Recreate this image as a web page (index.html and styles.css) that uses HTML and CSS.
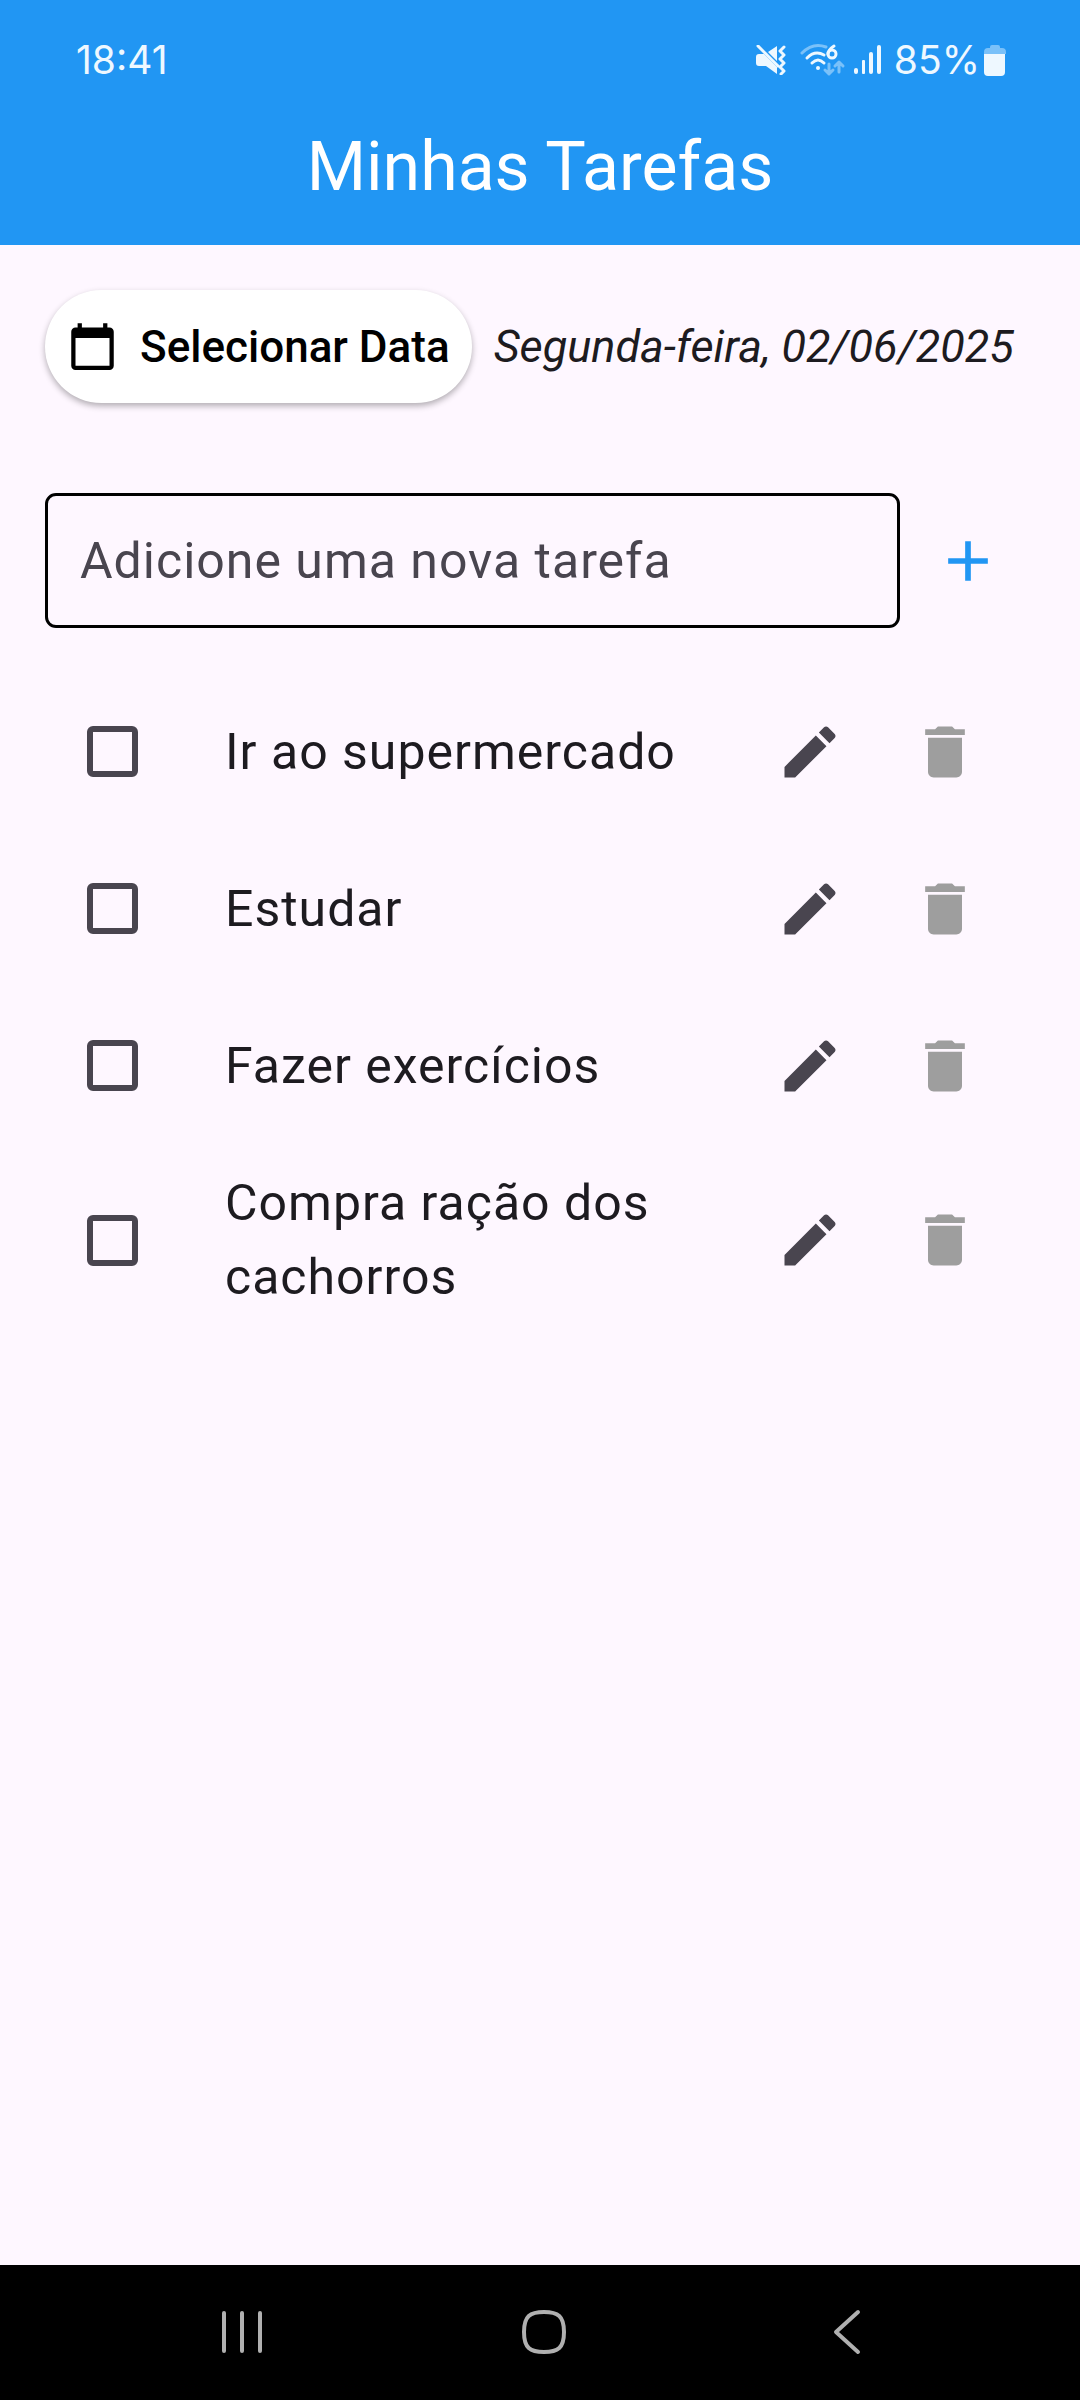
FILE: index.html
```html
<!DOCTYPE html>
<html lang="pt-BR">
<head>
<meta charset="utf-8">
<meta name="viewport" content="width=device-width, initial-scale=1">
<title>Minhas Tarefas</title>
<link rel="stylesheet" href="styles.css">
</head>
<body>
<svg class="sprite" aria-hidden="true">
  <symbol id="edit" viewBox="0 0 24 24"><path d="M3 17.25V21h3.75L17.81 9.94l-3.75-3.75L3 17.25zM20.71 7.04c.39-.39.39-1.02 0-1.41l-2.34-2.34c-.39-.39-1.02-.39-1.41 0l-1.83 1.83 3.75 3.75 1.83-1.83z"/></symbol>
  <symbol id="delete" viewBox="0 0 24 24"><path d="M6 19c0 1.1.9 2 2 2h8c1.1 0 2-.9 2-2V7H6v12zM19 4h-3.5l-1-1h-5l-1 1H5v2h14V4z"/></symbol>
</svg>
<header class="top">
  <div class="status">
    <span class="clock">18:41</span>
    <div class="indicators">
      <svg class="mute" viewBox="0 0 30 30" width="30" height="30" aria-hidden="true">
        <path d="M3 9h5l13 13v7l-11-8H3q-3 0-3-3v-6q0-3 3-3z M12 7l9-6v15z"/>
        <path class="line" d="M2 1l20 20M28 2l-4 4 4 4-4 4 4 4-4 4 4 4-3 3"/>
      </svg>
      <svg class="wifi" viewBox="0 0 46 34" width="46" height="34" aria-hidden="true">
        <path class="line dim" d="M2 10Q13 -1 26 4"/>
        <path class="line" d="M7 15Q15 7 24 12M12 20Q18 14 24 20"/>
        <circle cx="18" cy="25" r="2"/>
        <path class="line" d="M34 3Q28 7 28 11"/>
        <circle class="line" cx="32" cy="11" r="4"/>
        <path class="line dim" d="M29 21v10M25 27l4 4 4-4M39 29V19M35 23l4-4 4 4"/>
      </svg>
      <svg class="signal" viewBox="0 0 28 30" width="28" height="30" aria-hidden="true">
        <rect x="0" y="23" width="4" height="6" rx="2"/><rect x="8" y="15" width="3" height="14" rx="1"/><rect x="15" y="7" width="4" height="22" rx="2"/><rect x="23" y="0" width="4" height="29" rx="2"/>
      </svg>
      <span class="charge">85%</span>
      <svg class="battery" viewBox="0 0 22 32" width="22" height="32" aria-hidden="true">
        <path class="shade" d="M6 4V3q0-2 2-2h6q2 0 2 2v1h2q4 0 4 4v2H0V8q0-4 4-4z"/>
        <path d="M0 10h21v18q0 4-4 4H4q-4 0-4-4z"/>
      </svg>
    </div>
  </div>
  <h1 class="title">Minhas Tarefas</h1>
</header>
<main class="content">
  <div class="date-row">
    <button class="date-button" type="button">
      <svg viewBox="0 0 24 24" width="51" height="51" aria-hidden="true"><path d="M20 3h-1V1h-2v2H7V1H5v2H4c-1.1 0-2 .9-2 2v16c0 1.1.9 2 2 2h16c1.1 0 2-.9 2-2V5c0-1.1-.9-2-2-2zm0 18H4V8h16v13z"/></svg>
      Selecionar Data
    </button>
    <span class="date">Segunda-feira, 02/06/2025</span>
  </div>
  <form class="add-row">
    <input class="new-task" type="text" placeholder="Adicione uma nova tarefa" aria-label="Adicione uma nova tarefa">
    <button class="icon-button add" type="button" aria-label="Adicionar"><svg class="icon" viewBox="0 0 24 24" aria-hidden="true"><path d="M19 13h-6v6h-2v-6H5v-2h6V5h2v6h6v2z"/></svg></button>
  </form>
  <ul class="tasks">
    <li class="task">
      <span class="check-area"><input class="check" type="checkbox" id="t1"></span>
      <label class="name" for="t1">Ir ao supermercado</label>
      <button class="icon-button edit" type="button" aria-label="Editar"><svg class="icon"><use href="#edit"/></svg></button>
      <button class="icon-button delete" type="button" aria-label="Excluir"><svg class="icon"><use href="#delete"/></svg></button>
    </li>
    <li class="task">
      <span class="check-area"><input class="check" type="checkbox" id="t2"></span>
      <label class="name" for="t2">Estudar</label>
      <button class="icon-button edit" type="button" aria-label="Editar"><svg class="icon"><use href="#edit"/></svg></button>
      <button class="icon-button delete" type="button" aria-label="Excluir"><svg class="icon"><use href="#delete"/></svg></button>
    </li>
    <li class="task">
      <span class="check-area"><input class="check" type="checkbox" id="t3"></span>
      <label class="name" for="t3">Fazer exercícios</label>
      <button class="icon-button edit" type="button" aria-label="Editar"><svg class="icon"><use href="#edit"/></svg></button>
      <button class="icon-button delete" type="button" aria-label="Excluir"><svg class="icon"><use href="#delete"/></svg></button>
    </li>
    <li class="task">
      <span class="check-area"><input class="check" type="checkbox" id="t4"></span>
      <label class="name" for="t4">Compra ração dos cachorros</label>
      <button class="icon-button edit" type="button" aria-label="Editar"><svg class="icon"><use href="#edit"/></svg></button>
      <button class="icon-button delete" type="button" aria-label="Excluir"><svg class="icon"><use href="#delete"/></svg></button>
    </li>
  </ul>
</main>
<nav class="system-nav" aria-label="Sistema">
  <button class="nav-button" type="button" aria-label="Recentes"><svg viewBox="0 0 48 48" width="48" height="48"><path d="M6 5v38M24 5v38M42 5v38"/></svg></button>
  <button class="nav-button" type="button" aria-label="Início"><svg viewBox="0 0 48 48" width="48" height="48"><path d="M24 4C38 4 44 8 44 24S38 44 24 44 4 40 4 24 10 4 24 4z"/></svg></button>
  <button class="nav-button" type="button" aria-label="Voltar"><svg viewBox="0 0 48 48" width="48" height="48"><path d="M35 4L13 24l22 20"/></svg></button>
</nav>
</body>
</html>
```
FILE: styles.css
```css
* {
  box-sizing: border-box;
}

body {
  margin: 0;
  min-height: 100vh;
  display: flex;
  flex-direction: column;
  background: #fef7ff;
  color: #1d1b20;
  font-family: Roboto, sans-serif;
  font-size: 50px;
}

button {
  border: 0;
  padding: 0;
  background: none;
  font: inherit;
  color: inherit;
}

.sprite {
  display: none;
}

/* Header */
.top {
  background: #2196f3;
  color: #fff;
}

.status {
  display: flex;
  justify-content: space-between;
  align-items: center;
  padding: 32px 74px 2px 76px;
  color: #eef8ff;
  font-family: Inter, sans-serif;
  font-size: 39px;
  line-height: 56px;
}

.indicators {
  display: flex;
  align-items: center;
  fill: currentColor;
}

.line {
  fill: none;
  stroke: currentColor;
  stroke-width: 3;
  stroke-linecap: round;
  stroke-linejoin: round;
}

.dim {
  stroke: #7ac1f9;
}

.shade {
  fill: #7ac1f9;
}

.wifi {
  margin: 0 8px 0 14px;
}

.charge {
  margin: 0 4px 0 12px;
}

.title {
  margin: 0;
  text-align: center;
  font-size: 68px;
  font-weight: 400;
  line-height: 155px;
}

/* Content */
.content {
  flex: 1;
  padding: 45px 45px 0;
}

.date-row {
  display: flex;
  align-items: center;
  gap: 22px;
}

.date-button {
  display: flex;
  align-items: center;
  gap: 22px;
  height: 113px;
  padding: 0 22px;
  border-radius: 57px;
  background: #fff;
  color: #000;
  font-size: 44px;
  font-weight: 500;
  white-space: nowrap;
  box-shadow: 0 3px 6px rgba(0, 0, 0, 0.3);
}

.date {
  font-size: 45px;
  font-style: italic;
  white-space: nowrap;
}

.add-row {
  display: flex;
  margin: 90px 0 45px;
}

.new-task {
  flex: 1;
  min-width: 0;
  height: 135px;
  padding: 0 32px;
  border: 3px solid #000;
  border-radius: 11px;
  background: transparent;
  color: inherit;
  font: inherit;
  letter-spacing: 1px;
}

.new-task::placeholder {
  color: #49454f;
  opacity: 1;
}

.icon-button {
  flex: none;
  display: grid;
  place-items: center;
  width: 135px;
  height: 135px;
}

.icon {
  width: 68px;
  height: 68px;
  fill: currentColor;
}

.add {
  color: #2196f3;
}

.edit {
  color: #49454f;
}

.delete {
  color: #9e9e9e;
}

.tasks {
  margin: 0;
  padding: 0;
  list-style: none;
}

.task {
  display: flex;
  align-items: center;
  min-height: 157px;
  padding: 0 23px 0 0;
}

.check-area {
  flex: none;
  display: grid;
  place-items: center;
  width: 135px;
  height: 135px;
}

.check {
  appearance: none;
  width: 51px;
  height: 51px;
  margin: 0;
  border: 6px solid #49454f;
  border-radius: 6px;
}

.name {
  flex: 1;
  margin: 0 45px;
  padding: 22px 0;
  line-height: 74px;
  letter-spacing: 1px;
}

/* Bottom system bar */
.system-nav {
  display: grid;
  grid-template-columns: repeat(3, 1fr);
  height: 135px;
  padding: 0 82px 2px 91px;
  background: #000;
}

.nav-button {
  display: grid;
  place-items: center;
}

.nav-button path {
  fill: none;
  stroke: #b0b0b0;
  stroke-width: 4;
  stroke-linecap: round;
  stroke-linejoin: round;
}
```
